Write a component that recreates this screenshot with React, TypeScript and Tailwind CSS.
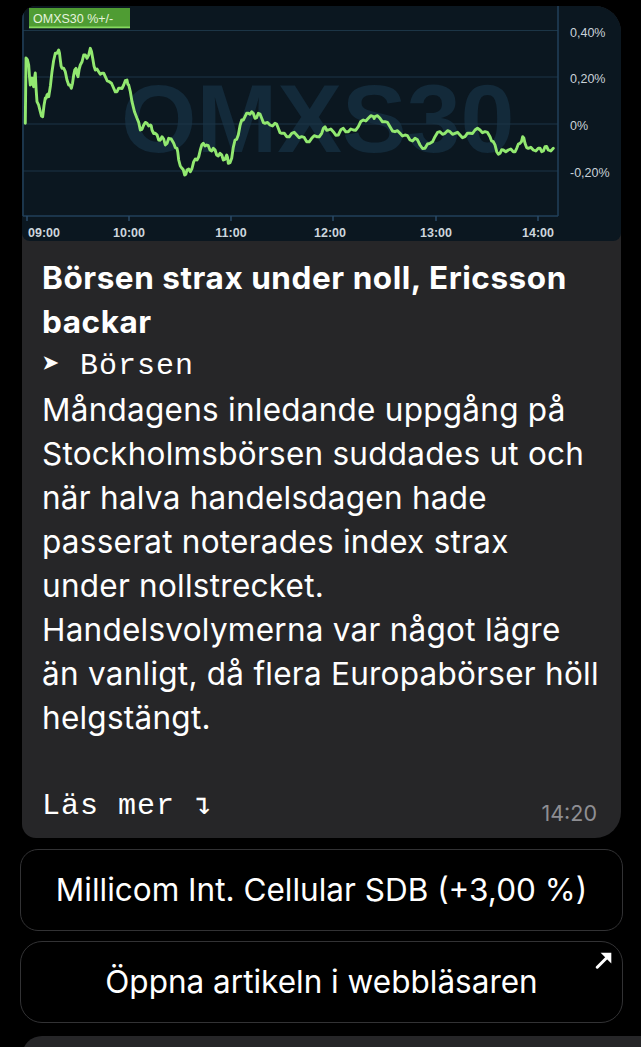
import React from "react";

const RAW =
  "25.3,123.3 26,58 28.7,65 30.3,85 32,78 33.7,86.7 35.3,73 37,101.7 40.3,111.7 42.7,116.7 45.3,98 47,95 48.7,96.7 52,71.7 55.3,53.3 58.7,50 60.3,60 62,68.3 65.3,71.7 68.7,85 71.3,88.3 73.7,75 76,68.3 78,76.7 80.3,65 83.7,55 87,58.3 90.3,48.3 92.7,58.3 95.3,70 98.7,71.7 102,73.3 105.3,76.7 109.3,81.7 113.7,88.3 117,91.7 120.3,88.3 123.7,85 127,80 128.7,85 132,101.7 137,118.3 140.3,130 143.7,125 147,123.3 150.3,125 152,130 155.3,133.3 158.7,140 162,136.7 165.3,145 168.7,138.3 173.7,143.3 177,148.3 178.7,160 182,168.3 184.7,175 187,170 190.3,171.7 193.7,161.7 197,160 200.3,150 203.3,143.3 206.7,145 210,150 213.3,148.3 216.7,155 220,153.3 223.3,160 226.7,155 228.3,163.3 231.7,158.3 235,140 238.3,135 241.7,120 245,116.7 248.3,113.3 251.7,111.7 255,118.3 258.3,113.3 261.7,118.3 265,123.3 270,125 275,123.3 278.3,128.3 281.7,133.3 286.7,136.7 291.7,133.3 296.7,135 301.7,136.7 306.7,141.7 311.7,138.3 316.7,136.7 321.7,133.3 325,126.7 328.3,130 333.3,131.7 338.3,135 343.3,128.3 348.3,131.7 353.3,130 358.3,126.7 363.3,120 368.3,118.3 373.3,116.7 375,116.7 380,118.3 385,121.7 390,126.7 395,131.7 400,133.3 405,135 410,140 415,138.3 420,145 425,148.3 430,143.3 435,136.7 440,131.7 445,133.3 450,131.7 455,133.3 460,135 465,136.7 470,133.3 475,130 480,130 485,131.7 490,136.7 493.3,141.7 496.7,151.7 500,153.3 503.3,150 508.3,150 513.3,151.7 516.7,148.3 520,143.3 522.7,136.7 525,143.3 528.3,148.3 533.3,150 538.3,148.3 541.7,151.7 545,146.7 548.3,150 553.3,148.3";

function buildPoints(): string {
  const pts = RAW.split(" ").map((p) => p.split(",").map(Number));
  const out: string[] = [];
  for (let i = 0; i < pts.length; i++) {
    out.push(`${pts[i][0]},${pts[i][1]}`);
    if (i < pts.length - 1 && i > 0) {
      const mx = (pts[i][0] + pts[i + 1][0]) / 2;
      const my = (pts[i][1] + pts[i + 1][1]) / 2 + (i % 2 === 0 ? 1.8 : -1.8);
      out.push(`${mx.toFixed(1)},${my.toFixed(1)}`);
    }
  }
  return out.join(" ");
}

function Chart() {
  const grid = [30.5, 77, 124, 171];
  const ticks = [
    { x: 27, t: "09:00", anchor: "start" as const, tx: 28 },
    { x: 129, t: "10:00", anchor: "middle" as const, tx: 129 },
    { x: 231, t: "11:00", anchor: "middle" as const, tx: 231 },
    { x: 333, t: "12:00", anchor: "middle" as const, tx: 330 },
    { x: 436, t: "13:00", anchor: "middle" as const, tx: 436 },
    { x: 538, t: "14:00", anchor: "middle" as const, tx: 538 },
  ];
  const ylab = [
    { y: 36.5, t: "0,40%" },
    { y: 83, t: "0,20%" },
    { y: 130, t: "0%" },
    { y: 177, t: "-0,20%" },
  ];
  return (
    <div className="h-[235px] w-[599px] overflow-hidden rounded-b-[8px] bg-[#0b1720]">
      <svg width="599" height="235" viewBox="22 6 599 235" className="block">
        <text
          x="121"
          y="152"
          fontFamily="'Liberation Sans', Arial, sans-serif"
          fontWeight="700"
          fontSize="97"
          fill="#132a3a"
        >
          OMXS30
        </text>
        {grid.map((y) => (
          <line key={y} x1="23" x2="558" y1={y} y2={y} stroke="#1c3546" strokeWidth="1.2" />
        ))}
        <line x1="23" x2="23" y1="6" y2="216" stroke="#22405a" strokeWidth="1.5" />
        <line x1="558" x2="558" y1="6" y2="216" stroke="#22405a" strokeWidth="1.5" />
        <line x1="23" x2="558" y1="216" y2="216" stroke="#22405a" strokeWidth="1.5" />
        {ticks.map((k) => (
          <line key={k.t} x1={k.x} x2={k.x} y1="216" y2="221" stroke="#2a4a66" strokeWidth="1.5" />
        ))}
        <polyline
          points={buildPoints()}
          fill="none"
          stroke="#92e870"
          strokeWidth="2.9"
          strokeLinejoin="round"
          strokeLinecap="round"
        />
        <rect x="29" y="8" width="101" height="20" fill="#4f9c33" />
        <rect x="29" y="26.5" width="101" height="1.8" fill="#86d95f" />
        <text
          x="33"
          y="22.5"
          fontFamily="'Liberation Sans', Arial, sans-serif"
          fontSize="12.5"
          fill="#e4f3dc"
        >
          OMXS30 %+/-
        </text>
        {ylab.map((l) => (
          <text
            key={l.t}
            x="570"
            y={l.y}
            fontFamily="'Liberation Sans', Arial, sans-serif"
            fontSize="12.5"
            fill="#c9d2d9"
          >
            {l.t}
          </text>
        ))}
        {ticks.map((k) => (
          <text
            key={k.t + "l"}
            x={k.tx}
            y="237"
            textAnchor={k.anchor}
            fontFamily="'Liberation Sans', Arial, sans-serif"
            fontWeight="700"
            fontSize="12.5"
            fill="#cdd6dd"
          >
            {k.t}
          </text>
        ))}
      </svg>
    </div>
  );
}

const sans = "font-['Inter','Noto_Sans',sans-serif]";
const mono = "font-['Liberation_Mono','DejaVu_Sans_Mono',monospace]";

export default function App() {
  const body = [
    "Måndagens inledande uppgång på",
    "Stockholmsbörsen suddades ut och",
    "när halva handelsdagen hade",
    "passerat noterades index strax",
    "under nollstrecket.",
    "Handelsvolymerna var något lägre",
    "än vanligt, då flera Europabörser höll",
    "helgstängt.",
  ];
  return (
    <div className={`h-[1047px] w-full overflow-hidden bg-black pt-[6px] ${sans}`}>
      <div className="ml-[22px] w-[599px] overflow-hidden rounded-tl-[14px] rounded-tr-[26px] rounded-bl-[14px] rounded-br-[26px] bg-[#262628]">
        <Chart />
        <div className="px-[20px] pt-[15px] pb-[10px] text-white">
          <div className="text-[31.5px] font-bold leading-[44px] tracking-[0.55px] whitespace-nowrap">
            Börsen strax under noll, Ericsson
            <br />
            backar
          </div>
          <div className={`${mono} text-[30px] leading-[44px] tracking-[1px] whitespace-nowrap`}>
            ➤ Börsen
          </div>
          <div className="text-[31.5px] leading-[44px] tracking-[0.25px]">
            {body.map((l) => (
              <div key={l} className="whitespace-nowrap">
                {l}
              </div>
            ))}
            <div className="h-[44px]" />
          </div>
          <div className="flex items-end justify-between">
            <span className={`${mono} text-[30px] leading-[44px] tracking-[1px] whitespace-nowrap`}>
              Läs mer ↴
            </span>
            <span className="mr-[4px] mb-[1px] text-[21.5px] leading-[28px] text-[#8e8e93]">14:20</span>
          </div>
        </div>
      </div>
      <div className="mx-[20px] mt-[11px] flex h-[82px] w-[603px] items-center justify-center rounded-[18px] border-[1.5px] border-[#323234] bg-black">
        <span className="text-[31.5px] text-white">Millicom Int. Cellular SDB (+3,00 %)</span>
      </div>
      <div className="relative mx-[20px] mt-[10px] flex h-[82px] w-[603px] items-center justify-center rounded-[22px] border-[1.5px] border-[#323234] bg-black">
        <span className="text-[31.5px] text-white">Öppna artikeln i webbläsaren</span>
        <svg
          className="absolute right-[9px] top-[9px]"
          width="18"
          height="18"
          viewBox="0 0 16 16"
        >
          <line x1="2" y1="14.5" x2="12" y2="4.5" stroke="white" strokeWidth="2.6" strokeLinecap="round" />
          <polygon points="5,1.5 14.5,1.5 14.5,11" fill="white" />
        </svg>
      </div>
      <div className="mt-[13px] ml-[22px] h-[30px] w-[640px] rounded-tl-[20px] bg-[#262628]" />
    </div>
  );
}
